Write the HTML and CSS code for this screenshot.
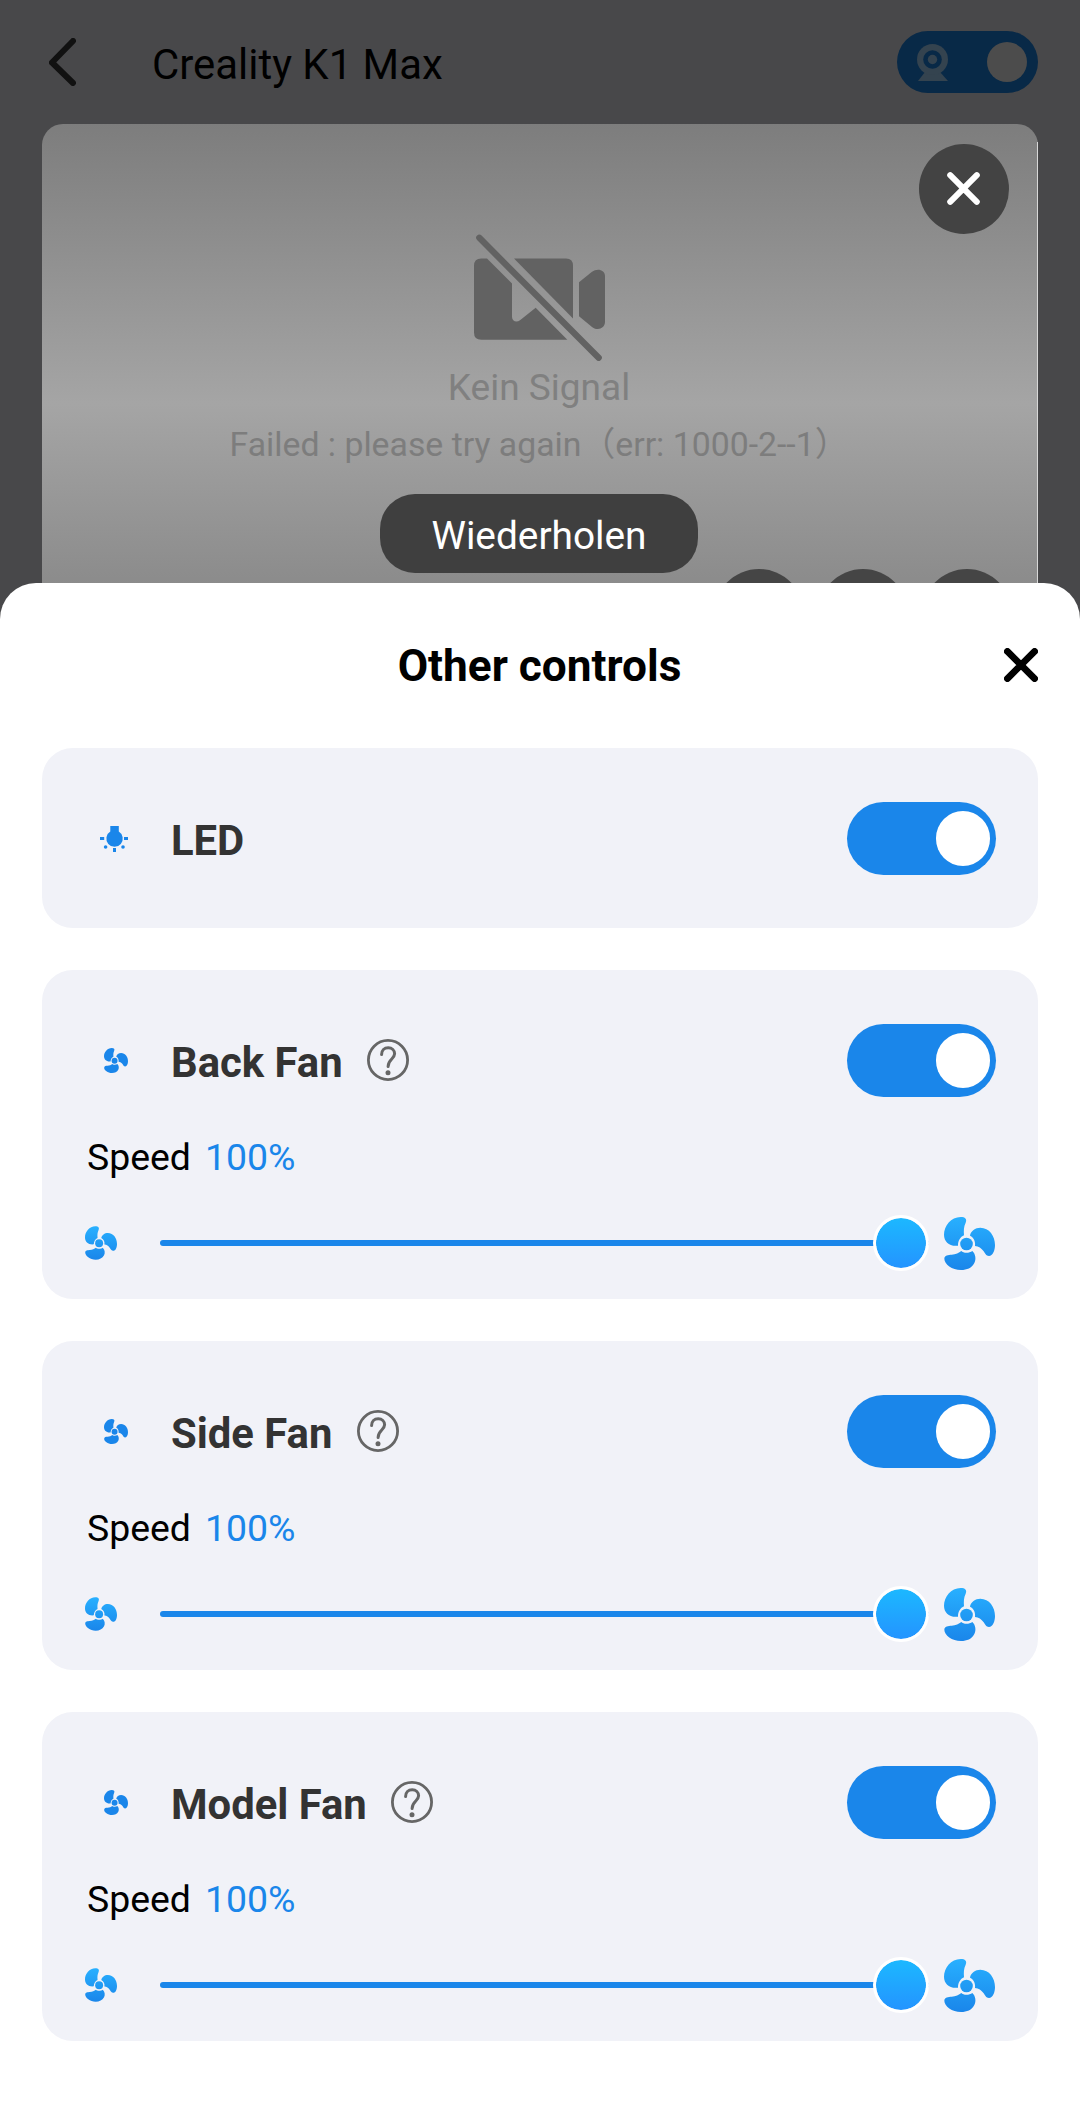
FILE: index.html
```
<!DOCTYPE html>
<html lang="de">
<head>
    <meta charset="UTF-8">
    <meta name="viewport" content="width=device-width, initial-scale=1.0">
    <title>Creality K1 Max - Other controls</title>
    <link rel="stylesheet" href="styles.css">
</head>
<body>

    <!-- Shared icons -->
    <svg class="icon-defs" width="0" height="0">
        <defs>
            <linearGradient id="fan-gradient" gradientUnits="userSpaceOnUse" x1="0" y1="51" x2="0" y2="210">
                <stop offset="0" stop-color="#28b0ff"/>
                <stop offset="1" stop-color="#1a86ea"/>
            </linearGradient>
            <symbol id="fan" viewBox="42 51 153 159">
                <path d="M92 51C105 51 112 57 107 68C101 80 101 92 102 106C91 111 84 122 84 137C58 140 42 125 42 104C42 78 63 51 92 51Z"/>
                <path d="M120 107C122 93 136 83 151 83C178 83 195 108 195 135C195 152 188 168 177 168C168 168 165 159 161 154C154 144 146 139 135 138C137 125 132 113 120 107Z"/>
                <path d="M94 153C100 160 118 160 127 153C137 162 139 178 133 189C125 204 111 210 93 210C66 210 43 192 43 176C43 165 55 165 65 164C77 163 87 159 94 153Z"/>
                <circle cx="109.5" cy="132" r="19"/>
            </symbol>
            <symbol id="help" viewBox="0 0 42 42">
                <circle cx="21" cy="21" r="19.6" fill="none" stroke="#666" stroke-width="2.8"/>
                <path d="M14.6 15.6C14.6 11.4 17.4 8.8 21.2 8.8C25 8.8 27.6 11.4 27.6 14.8C27.6 19.8 21.1 20.4 21.1 27.4" fill="none" stroke="#666" stroke-width="3" stroke-linecap="round"/>
                <circle cx="21" cy="33.8" r="2.5" fill="#666"/>
            </symbol>
        </defs>
    </svg>

    <div class="header">
        <svg class="back-icon" viewBox="0 0 27 48">
            <path d="M24 3L3 24.5L24 45"/>
        </svg>
        <h1>Creality K1 Max</h1>
        <div class="camera-toggle">
            <svg class="webcam-icon" viewBox="0 0 31 37">
                <path d="M8 28L1 37H31L23 28Z"/>
                <circle cx="15.5" cy="15.5" r="15.5"/>
                <circle class="ring" cx="15.5" cy="15.5" r="9.3"/>
                <circle cx="15.5" cy="15.5" r="4.7"/>
            </svg>
            <span class="camera-knob"></span>
        </div>
    </div>

    <div class="video">
        <div class="video-close">
            <svg viewBox="0 0 33 33"><path d="M3.2 3.2L29.8 29.8M29.8 3.2L3.2 29.8"/></svg>
        </div>
        <svg class="no-camera" viewBox="102 70 393 380">
            <path d="M124 143H141L216 218V318C216 332 230 336 240 328L287 291L382 387H124Q102 387 102 365V165Q102 143 124 143Z"/>
            <path d="M222 143H378Q399 143 399 165V323Z"/>
            <path d="M417 214L456 183C472 171 495 177 495 196V333C495 353 473 361 457 349L417 316Z"/>
            <path class="slash" d="M118 81L476 441"/>
        </svg>
        <p class="no-signal">Kein Signal</p>
        <p class="error-text">Failed : please try again（err: 1000-2--1）</p>
        <button class="retry-button">Wiederholen</button>
        <div class="video-actions">
            <span></span>
            <span></span>
            <span></span>
        </div>
    </div>

    <div class="sheet">
        <div class="sheet-header">
            <h2>Other controls</h2>
            <svg class="sheet-close" viewBox="0 0 34 34"><path d="M3.4 3.4L30.6 30.6M30.6 3.4L3.4 30.6"/></svg>
        </div>

        <div class="card">
            <div class="card-row">
                <svg class="led-icon" viewBox="0 0 28 26">
                    <path d="M10.3 0H18.8V5.6A8.2 8.2 0 1 1 10.3 5.6Z"/>
                    <path d="M0 11H4.2V14H0ZM24 11H28V14H24ZM13 22H16V26H13Z"/>
                    <circle cx="5.6" cy="21" r="1.8"/>
                    <circle cx="23" cy="21" r="1.8"/>
                </svg>
                <h3>LED</h3>
                <div class="switch"></div>
            </div>
        </div>

        <div class="card">
            <div class="card-row">
                <svg class="fan-icon"><use href="#fan"/></svg>
                <h3>Back Fan</h3>
                <svg class="help-icon"><use href="#help"/></svg>
                <div class="switch"></div>
            </div>
            <p class="speed">Speed <span>100%</span></p>
            <div class="slider-row">
                <svg class="fan-slow"><use href="#fan"/></svg>
                <div class="slider"><span></span></div>
                <svg class="fan-fast"><use href="#fan"/></svg>
            </div>
        </div>

        <div class="card">
            <div class="card-row">
                <svg class="fan-icon"><use href="#fan"/></svg>
                <h3>Side Fan</h3>
                <svg class="help-icon"><use href="#help"/></svg>
                <div class="switch"></div>
            </div>
            <p class="speed">Speed <span>100%</span></p>
            <div class="slider-row">
                <svg class="fan-slow"><use href="#fan"/></svg>
                <div class="slider"><span></span></div>
                <svg class="fan-fast"><use href="#fan"/></svg>
            </div>
        </div>

        <div class="card">
            <div class="card-row">
                <svg class="fan-icon"><use href="#fan"/></svg>
                <h3>Model Fan</h3>
                <svg class="help-icon"><use href="#help"/></svg>
                <div class="switch"></div>
            </div>
            <p class="speed">Speed <span>100%</span></p>
            <div class="slider-row">
                <svg class="fan-slow"><use href="#fan"/></svg>
                <div class="slider"><span></span></div>
                <svg class="fan-fast"><use href="#fan"/></svg>
            </div>
        </div>
    </div>

</body>
</html>
```

FILE: styles.css
```
* {
    box-sizing: border-box;
}

body {
    font-family: Roboto, "Noto Sans CJK SC", sans-serif;
    background-color: #48484a;
    margin: 0;
    height: 2125px;
    overflow: hidden;
}

h1, h2, h3, p {
    margin: 0;
}

svg {
    display: block;
    flex-shrink: 0;
}

.icon-defs {
    position: absolute;
}

/* Header */
.header {
    display: flex;
    align-items: center;
    height: 124px;
    padding: 0 42px 0 49px;
}

.back-icon {
    width: 27px;
    height: 48px;
    fill: none;
    stroke: #111;
    stroke-width: 6;
    stroke-linecap: round;
    stroke-linejoin: round;
}

.header h1 {
    margin-left: 76px;
    font-size: 41.9px;
    font-weight: 400;
    line-height: 50px;
    padding-top: 5px;
    color: #000;
}

.camera-toggle {
    display: flex;
    align-items: center;
    justify-content: space-between;
    width: 141px;
    height: 62px;
    margin-left: auto;
    padding: 0 11px 0 20px;
    border-radius: 31px;
    background-color: #082947;
}

.webcam-icon {
    width: 31px;
    height: 37px;
    fill: #34434f;
}

.webcam-icon .ring {
    fill: #082947;
}

.camera-knob {
    width: 40px;
    height: 40px;
    border-radius: 50%;
    background-color: #4c4c4c;
}

/* Video */
.video {
    position: relative;
    display: flex;
    flex-direction: column;
    align-items: center;
    height: 559px;
    margin: 0 42px;
    padding: 110px 2px 0 0;
    border-radius: 21px;
    background: linear-gradient(#7d7d7d, #a5a5a5 50%, #7d7d7d);
}

.video::after {
    content: "";
    position: absolute;
    top: 18px;
    right: 0;
    bottom: 20px;
    width: 1px;
    background-color: #d8d8d8;
}

.video-close {
    position: absolute;
    top: 20px;
    right: 29px;
    display: flex;
    align-items: center;
    justify-content: center;
    width: 90px;
    height: 90px;
    padding: 0 1px 1px 0;
    border-radius: 50%;
    background-color: #434343;
}

.video-close svg {
    width: 33px;
    height: 33px;
    stroke: #fff;
    stroke-width: 6;
    stroke-linecap: round;
}

.no-camera {
    width: 131px;
    height: 127px;
    fill: #626262;
}

.no-camera .slash {
    stroke: #626262;
    stroke-width: 19;
    stroke-linecap: round;
}

.no-signal {
    margin-top: 5px;
    font-size: 37px;
    line-height: 44px;
    color: #808080;
}

.error-text {
    margin-top: 14px;
    font-size: 33.8px;
    line-height: 42px;
    color: #7d7d7d;
    white-space: nowrap;
}

.retry-button {
    flex-shrink: 0;
    width: 318px;
    height: 79px;
    margin-top: 28px;
    padding: 4px 0 0;
    border: none;
    border-radius: 35px;
    font-family: inherit;
    font-size: 38.8px;
    color: #fff;
    background-color: #3f3f3f;
}

.video-actions {
    position: absolute;
    right: 26px;
    bottom: 24px;
    display: flex;
    gap: 14px;
}

.video-actions span {
    width: 90px;
    height: 90px;
    border-radius: 50%;
    background-color: #454545;
}

/* Bottom sheet */
.sheet {
    position: relative;
    display: flex;
    flex-direction: column;
    gap: 42px;
    height: 1542px;
    margin-top: -100px;
    padding: 0 42px;
    border-radius: 36px 36px 0 0;
    background-color: #fff;
}

.sheet-header {
    position: relative;
    height: 123px;
    padding: 56px 1px 0 0;
    text-align: center;
}

.sheet-header h2 {
    font-size: 44.2px;
    font-weight: 700;
    line-height: 54px;
    color: #000;
}

.sheet-close {
    position: absolute;
    top: 65px;
    right: 0;
    width: 34px;
    height: 34px;
    stroke: #000;
    stroke-width: 6.8;
    stroke-linecap: round;
}

.card {
    flex-shrink: 0;
    height: 329px;
    padding: 54px 42px 0;
    border-radius: 31px;
    background-color: #f1f2f8;
}

.sheet-header + .card {
    height: 180px;
}

.card-row {
    display: flex;
    align-items: center;
    height: 73px;
}

.led-icon {
    width: 28px;
    height: 26px;
    margin: 0 3px 0 16px;
    fill: #1a86ea;
}

.fan-icon {
    width: 24px;
    height: 25px;
    margin: 0 3px 0 20px;
    fill: #1a86ea;
}

.card h3 {
    margin-left: 40px;
    padding-top: 5px;
    font-size: 41.8px;
    font-weight: 700;
    line-height: 50px;
    color: #333;
}

.help-icon {
    width: 42px;
    height: 42px;
    margin: 0 0 1px 24.5px;
}

.switch {
    width: 149px;
    height: 73px;
    margin-left: auto;
    padding: 9px 0 0 88.5px;
    border-radius: 37px;
    background-color: #1a86ea;
}

.switch::after {
    content: "";
    display: block;
    width: 54.5px;
    height: 54.5px;
    border-radius: 50%;
    background-color: #fff;
}

.speed {
    display: flex;
    gap: 14px;
    margin: 38px 0 0 3px;
    font-size: 37.4px;
    line-height: 44px;
    color: #000;
}

.speed span {
    color: #1a86ea;
}

.slider-row {
    display: flex;
    align-items: center;
    height: 56px;
    margin-top: 36px;
}

.fan-slow {
    width: 32px;
    height: 34px;
    margin-left: 1px;
    fill: url(#fan-gradient);
}

.fan-fast {
    width: 51px;
    height: 53px;
    margin-left: 15px;
    fill: url(#fan-gradient);
}

.slider {
    display: flex;
    align-items: center;
    justify-content: flex-end;
    width: 769px;
    height: 6px;
    margin-left: 43px;
    border-radius: 3px;
    background-color: #1a86ea;
}

.slider span {
    width: 56px;
    height: 56px;
    flex-shrink: 0;
    border: 3px solid #fff;
    border-radius: 50%;
    background: linear-gradient(#1cb8ff, #2494ff) padding-box;
}
```
